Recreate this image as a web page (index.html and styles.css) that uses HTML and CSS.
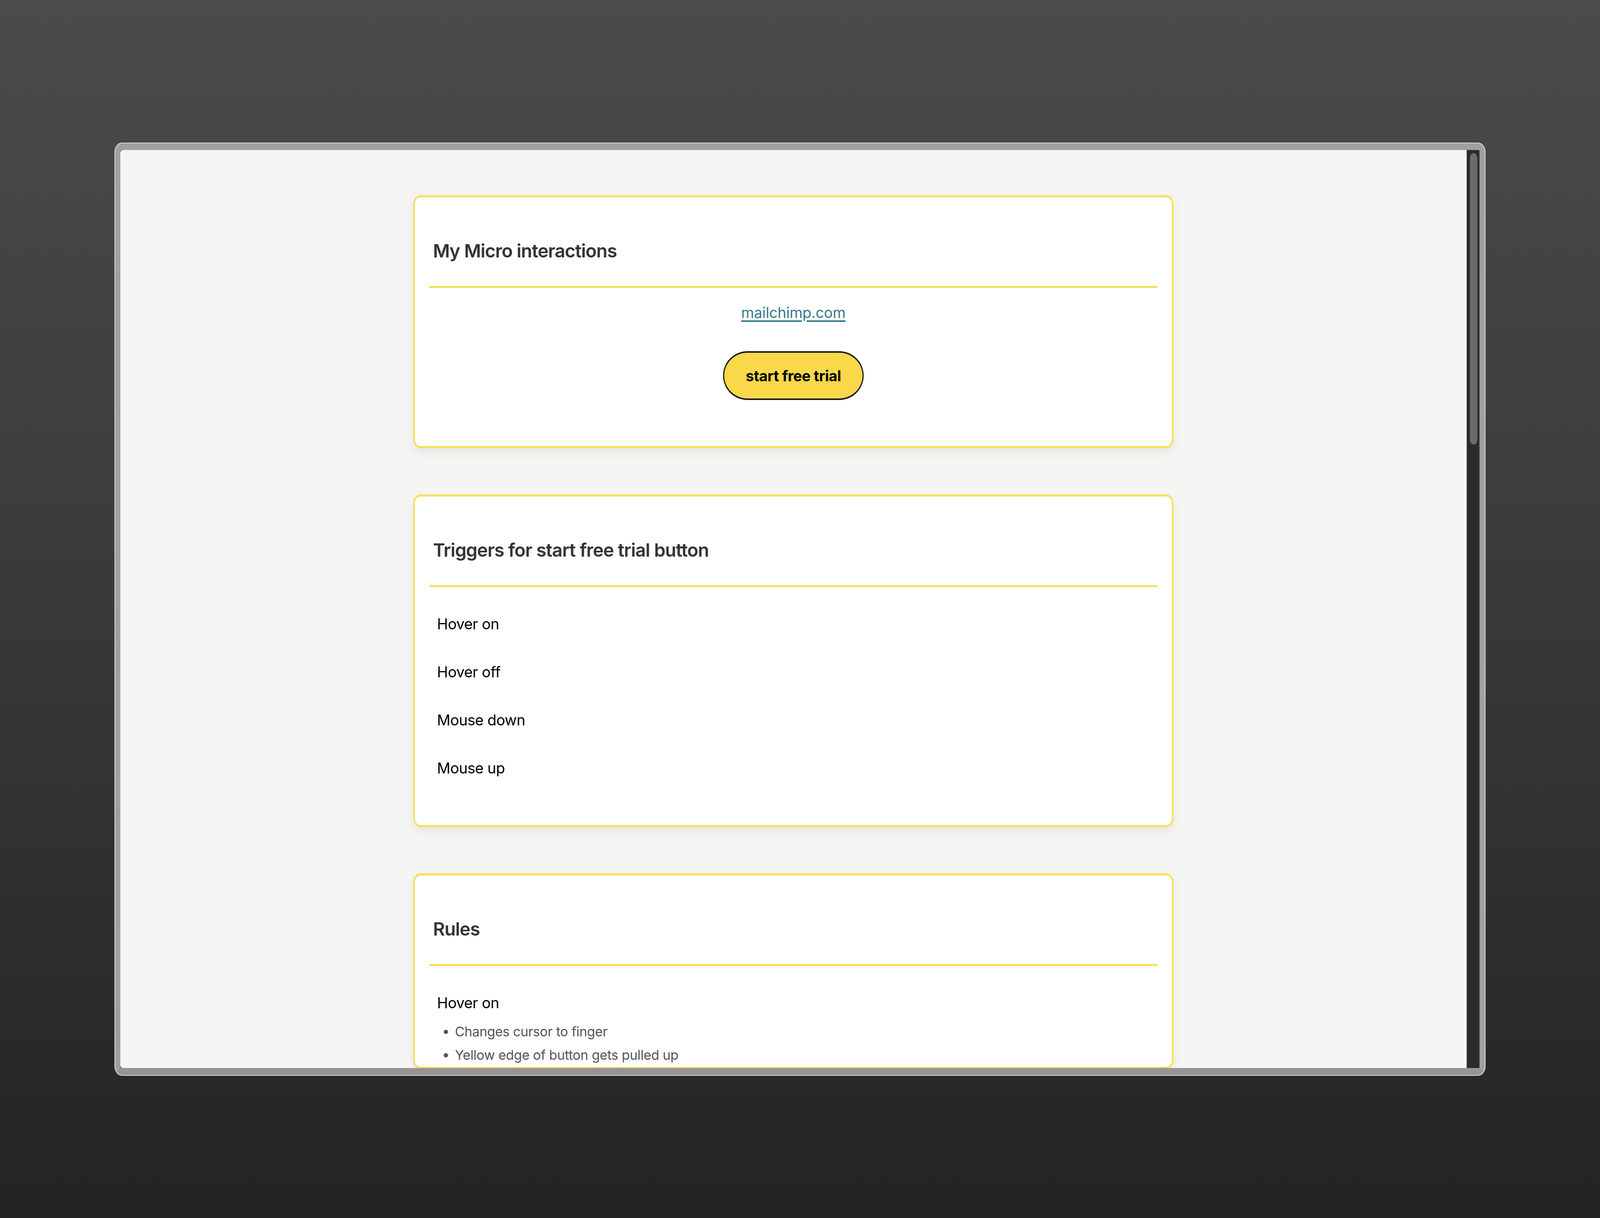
FILE: index.html
```html
<!DOCTYPE html>
<html lang="en">
<head>
<meta charset="utf-8">
<title>My Micro interactions</title>
<link rel="stylesheet" href="styles.css">
</head>
<body>
<div class="desktop">
  <div class="window">
    <div class="viewport">
      <main class="page">
        <section class="card">
          <header class="card-head"><h2>My Micro interactions</h2></header>
          <div class="card-body demo">
            <a class="site-link" href="#">mailchimp.com</a>
            <button class="trial-btn" type="button">start free trial</button>
          </div>
        </section>

        <section class="card">
          <header class="card-head"><h2>Triggers for start free trial button</h2></header>
          <div class="card-body triggers">
            <p class="item">Hover on</p>
            <p class="item">Hover off</p>
            <p class="item">Mouse down</p>
            <p class="item">Mouse up</p>
          </div>
        </section>

        <section class="card">
          <header class="card-head"><h2>Rules</h2></header>
          <div class="card-body rules">
            <p class="item">Hover on</p>
            <ul class="rule-list">
              <li>Changes cursor to finger</li>
              <li>Yellow edge of button gets pulled up</li>
            </ul>
          </div>
        </section>
      </main>
    </div>
    <div class="scrollbar"><div class="thumb"></div></div>
  </div>
</div>
</body>
</html>
```

FILE: styles.css
```css
/* design units: 1 pixel of the 5088 x 3118 design, across and down */
:root {
  --ux: calc(100vw / 5088);
  --uy: calc(100vh / 3118);
}

* { box-sizing: border-box; }

html, body {
  margin: 0;
  padding: 0;
  overflow: hidden;
}

html {
  background: #232323;
}

body {
  width: 100vw;
  height: 100vh;
  font-family: Inter, "Noto Sans", "Liberation Sans", sans-serif;
  background: linear-gradient(180deg, #4b4b4b 0%, #3b3b3b 45%, #232323 100%);
}

.desktop {
  width: 100%;
  height: 100%;
  padding: calc(367 * var(--uy)) 0 0 calc(367 * var(--ux));
}

.window {
  width: calc(4354 * var(--ux));
  height: calc(2385 * var(--uy));
  display: flex;
  border-style: solid;
  border-color: #a0a0a0 #a0a0a0 #959595;
  border-width: calc(17 * var(--uy)) calc(17 * var(--ux)) calc(18 * var(--uy));
  border-radius: calc(22 * var(--ux)) / calc(22 * var(--uy));
  box-shadow: 0 0 0 calc(2 * var(--uy)) #dadada;
  background: #2b2b2b;
  overflow: hidden;
}

.viewport {
  flex: 1;
  min-width: 0;
  height: 100%;
  background: #f5f5f3;
  border-radius: calc(8 * var(--ux)) 0 0 calc(8 * var(--ux)) / calc(8 * var(--uy)) 0 0 calc(8 * var(--uy));
  overflow: hidden;
  border-right: calc(2 * var(--ux)) solid #bdbdbd;
}

.page {
  display: flex;
  flex-direction: column;
  align-items: center;
  gap: calc(119 * var(--uy));
  padding-top: calc(116 * var(--uy));
}

.card {
  width: calc(2418 * var(--ux));
  flex: none;
  background: #ffffff;
  border-style: solid;
  border-color: #fadf52;
  border-width: calc(5 * var(--uy)) calc(5 * var(--ux));
  border-radius: calc(22 * var(--ux)) / calc(22 * var(--uy));
  box-shadow: 0 calc(10 * var(--uy)) calc(26 * var(--uy)) rgba(0, 0, 0, 0.07);
}

.card-head {
  margin: 0 calc(46 * var(--ux));
  padding: calc(102 * var(--uy)) calc(12 * var(--ux)) calc(55 * var(--uy));
  border-bottom: calc(5 * var(--uy)) solid #fadf52;
}

.card-head h2 {
  margin: 0;
  font-size: calc(58 * var(--ux));
  letter-spacing: calc(-1.2 * var(--ux));
  line-height: calc(70 * var(--uy));
  font-weight: 600;
  color: #333333;
}

.card-body {
  padding: 0 calc(46 * var(--ux));
}

.demo {
  display: flex;
  flex-direction: column;
  align-items: center;
  padding-top: calc(35 * var(--uy));
  padding-bottom: calc(118 * var(--uy));
}

.site-link {
  font-size: calc(47 * var(--ux));
  letter-spacing: calc(-0.3 * var(--ux));
  line-height: calc(57 * var(--uy));
  color: #347d89;
  text-decoration: underline;
  text-decoration-thickness: calc(4 * var(--uy));
  text-underline-offset: calc(6 * var(--uy));
}

.trial-btn {
  margin-top: calc(70 * var(--uy));
  height: calc(125 * var(--uy));
  padding: 0 calc(68 * var(--ux));
  font-family: inherit;
  font-size: calc(47 * var(--ux));
  letter-spacing: calc(-0.6 * var(--ux));
  font-weight: 700;
  color: #000000;
  background: #f9d84a;
  border-style: solid;
  border-color: #1c1c1c;
  border-width: calc(4 * var(--uy)) calc(4 * var(--ux));
  border-radius: 9999px;
}

.triggers {
  display: flex;
  flex-direction: column;
  gap: calc(66 * var(--uy));
  padding-top: calc(66 * var(--uy));
  padding-bottom: calc(117 * var(--uy));
  padding-left: calc(71 * var(--ux));
}

.item {
  margin: 0;
  font-size: calc(47 * var(--ux));
  letter-spacing: calc(-0.6 * var(--ux));
  line-height: calc(57 * var(--uy));
  color: #000000;
}

.rules {
  padding-top: calc(66 * var(--uy));
  padding-left: calc(71 * var(--ux));
}

.rule-list {
  margin: calc(15 * var(--uy)) 0 0;
  padding-left: calc(57 * var(--ux));
  font-size: calc(42 * var(--ux));
  letter-spacing: calc(-0.4 * var(--ux));
  line-height: calc(60 * var(--uy));
  color: #555555;
}

.scrollbar {
  width: calc(41 * var(--ux));
  height: 100%;
  flex: none;
  background: #2b2b2b;
  padding: calc(8 * var(--uy)) calc(7 * var(--ux)) 0 calc(11 * var(--ux));
  border-right: calc(3 * var(--ux)) solid #4a4a4a;
}

.thumb {
  width: calc(23 * var(--ux));
  height: calc(746 * var(--uy));
  border-radius: calc(12 * var(--ux)) / calc(12 * var(--uy));
  background: #6b6b6b;
}
```
